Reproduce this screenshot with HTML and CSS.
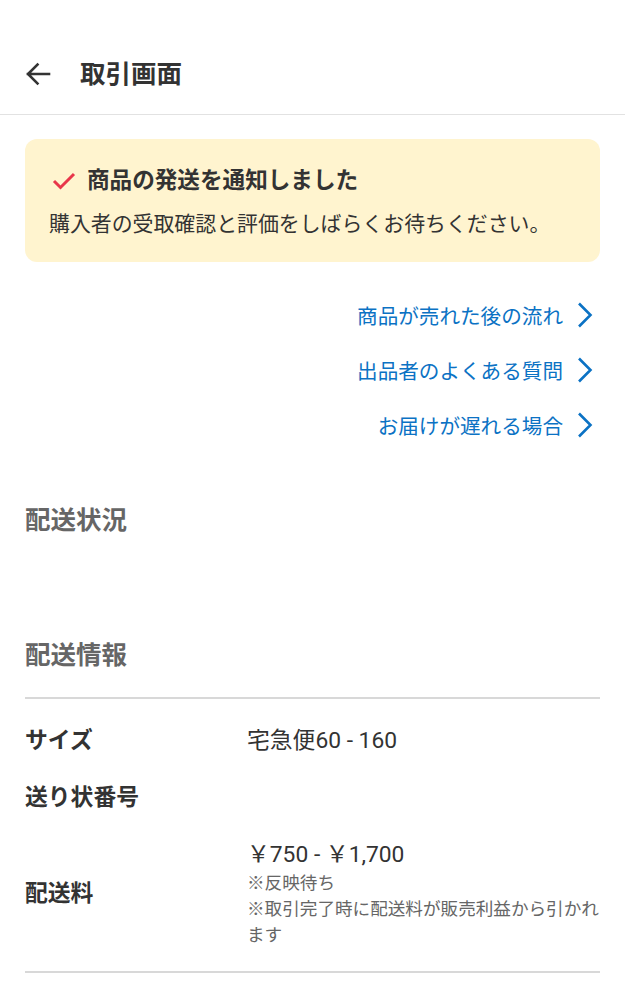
FILE: index.html
```html
<!DOCTYPE html>
<html lang="ja">
<head>
<meta charset="utf-8">
<link rel="stylesheet" href="styles.css">
</head>
<body>
<header class="topbar">
  <svg class="back" width="26" height="24" viewBox="0 0 26 24"><path d="M24 12H3M12.5 2.5L3 12l9.5 9.5" fill="none" stroke="#333" stroke-width="2.6" stroke-linecap="square"/></svg>
  <h1 class="title">取引画面</h1>
</header>
<main class="content">
  <section class="notice">
    <div class="notice-head">
      <svg class="check" width="24" height="18" viewBox="0 0 24 18"><path d="M2 9l6.5 6.5L22 2" fill="none" stroke="#e8364a" stroke-width="3"/></svg>
      <span class="notice-title">商品の発送を通知しました</span>
    </div>
    <p class="notice-text">購入者の受取確認と評価をしばらくお待ちください。</p>
  </section>
  <nav class="links">
    <a class="link">商品が売れた後の流れ<svg class="chev" width="16" height="26" viewBox="0 0 16 26"><path d="M2 1.5L13.5 13 2 24.5" fill="none" stroke="#0b72c4" stroke-width="2.6"/></svg></a>
    <a class="link">出品者のよくある質問<svg class="chev" width="16" height="26" viewBox="0 0 16 26"><path d="M2 1.5L13.5 13 2 24.5" fill="none" stroke="#0b72c4" stroke-width="2.6"/></svg></a>
    <a class="link">お届けが遅れる場合<svg class="chev" width="16" height="26" viewBox="0 0 16 26"><path d="M2 1.5L13.5 13 2 24.5" fill="none" stroke="#0b72c4" stroke-width="2.6"/></svg></a>
  </nav>
  <h2 class="section-title status">配送状況</h2>
  <h2 class="section-title info">配送情報</h2>
  <dl class="info-list">
    <div class="row">
      <dt class="label">サイズ</dt>
      <dd class="value">宅急便60 - 160</dd>
    </div>
    <div class="row">
      <dt class="label">送り状番号</dt>
      <dd class="value"></dd>
    </div>
    <div class="row">
      <dt class="label">配送料</dt>
      <dd class="value">
        <div class="price">￥750 - ￥1,700</div>
        <div class="note">※反映待ち</div>
        <div class="note">※取引完了時に配送料が販売利益から引かれます</div>
      </dd>
    </div>
  </dl>
</main>
</body>
</html>
```
FILE: styles.css
```css
* { box-sizing: border-box; }
html, body { margin: 0; padding: 0; background: #fff; }
body {
  width: 625px;
  font-family: Roboto, "Noto Sans CJK JP", sans-serif;
  color: #333;
}
.topbar {
  height: 115px;
  padding: 34px 0 0 25px;
  display: flex;
  align-items: center;
  border-bottom: 1px solid #e2e2e2;
}
.back { display: block; margin-right: 29px; }
.title {
  margin: 0;
  font-size: 25.5px;
  line-height: 36px;
  font-weight: 700;
  color: #333;
}
.content { padding: 0 25px; }
.notice {
  margin-top: 24px;
  background: #fff4cf;
  border-radius: 12px;
  padding: 26px 24px 23px 24px;
}
.notice-head {
  display: flex;
  align-items: center;
  height: 32px;
  padding-left: 3px;
}
.check { display: block; margin-right: 11px; }
.notice-title {
  font-size: 22.6px;
  font-weight: 700;
  line-height: 32px;
  color: #333;
}
.notice-text {
  margin: 12px 0 0;
  font-size: 20.9px;
  line-height: 30px;
  color: #333;
}
.links {
  margin-top: 25px;
  display: flex;
  flex-direction: column;
  align-items: flex-end;
  padding-right: 7px;
}
.link {
  height: 55px;
  display: flex;
  align-items: center;
  font-size: 20.6px;
  color: #0b72c4;
  text-decoration: none;
}
.chev { display: block; margin-left: 14px; }
.section-title {
  margin: 0;
  font-size: 25.5px;
  line-height: 36px;
  font-weight: 700;
  color: #666;
}
.status { margin-top: 50px; }
.info { margin-top: 99px; }
.info-list {
  margin: 24px 0 0;
  border-top: 2px solid #d8d8d8;
  border-bottom: 2px solid #d8d8d8;
  padding: 27px 0 23px;
  display: flex;
  flex-direction: column;
  gap: 27px;
}
.row {
  display: grid;
  grid-template-columns: 222px 1fr;
  align-items: center;
  min-height: 30px;
}
.label {
  font-size: 22.8px;
  line-height: 30px;
  font-weight: 700;
  color: #333;
}
.value {
  margin: 0;
  font-size: 22.8px;
  line-height: 30px;
  color: #333;
}
.price { font-size: 22.8px; line-height: 30px; }
.note {
  font-size: 17.6px;
  line-height: 26px;
  color: #666;
}
```
